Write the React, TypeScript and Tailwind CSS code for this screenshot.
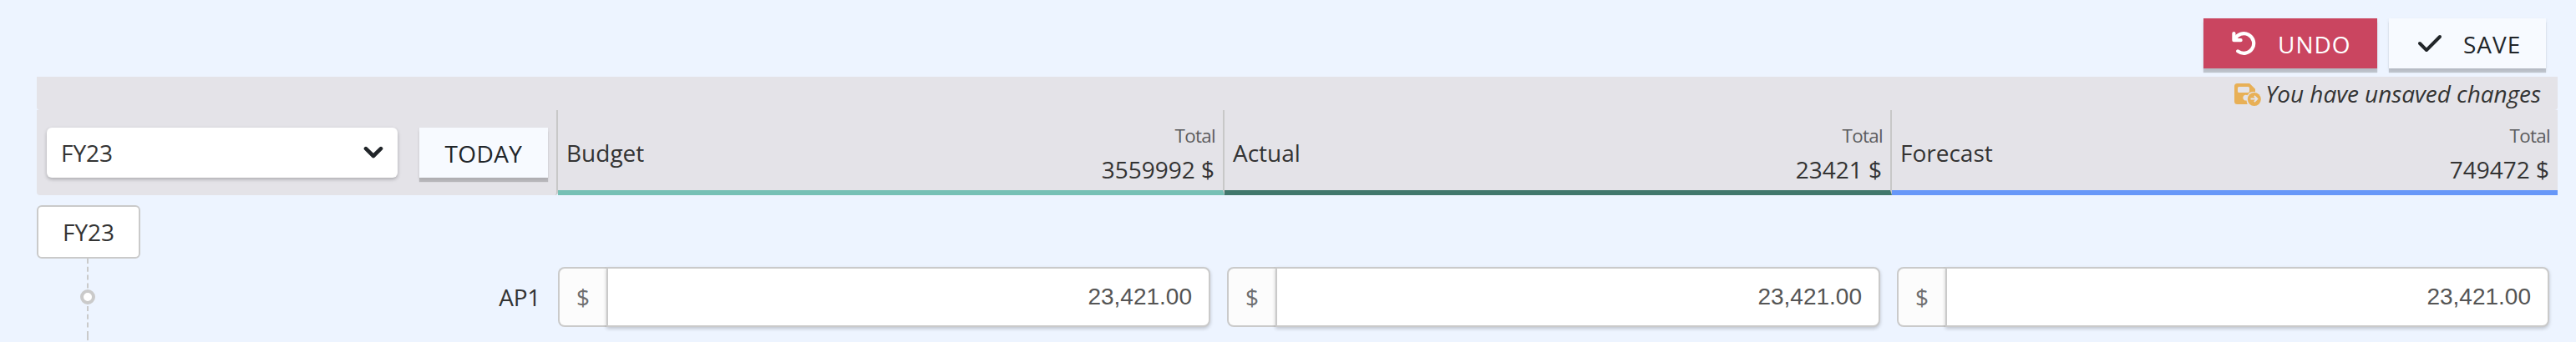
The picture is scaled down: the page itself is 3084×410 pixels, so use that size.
import { useState } from "react"
import { FaCheck } from "react-icons/fa6"

interface Column {
    name: string
    total: number
    value: string
    cell: string
    field: string
}

const columns: Column[] = [
    { name: "Budget", total: 3559992, value: "23,421.00", cell: "w-[798px] border-r-2 border-b-[#76c0b5]", field: "w-[781px]" },
    { name: "Actual", total: 23421, value: "23,421.00", cell: "w-[799px] border-r-2 border-b-[#41776c]", field: "w-[782px]" },
    { name: "Forecast", total: 749472, value: "23,421.00", cell: "w-[797px] border-b-[#6797f8]", field: "w-[781px]" },
]

const SaveMoveIcon = () => (
    <svg viewBox="0 0 32 27" className="w-8 h-[27px] shrink-0" fill="none">
        <path fillRule="evenodd" fill="#e8b056" d="M3.5 0H18.2L25 6.8V10.2A8.6 8.6 0 0 0 15.6 14.3A3.4 3.4 0 1 0 14.6 20.4Q14.7 23 15.8 25H3.5Q0 25 0 21.5V3.5Q0 0 3.5 0ZM5.5 3.9Q4 3.9 4 5.4V9.4Q4 10.9 5.5 10.9H16Q18 10.9 18 9.4V5.4Q18 3.9 16.5 3.9Z" />
        <circle cx="23.8" cy="19" r="8" fill="#e8b056" />
        <path d="M19.5 18.5H27M23.8 15L27.4 18.5L23.8 22" stroke="#e4e3e8" strokeWidth="1.8" />
    </svg>
)

const UndoIcon = () => (
    <svg viewBox="0 0 30 30" className="w-[30px] h-[30px] shrink-0" fill="none" stroke="currentColor" strokeWidth="4.2" strokeLinecap="round" strokeLinejoin="round">
        <path d="M2.4 3V11.2H10.6" />
        <path d="M3.6 10.2A11.8 11.8 0 1 1 7.2 24.4" />
    </svg>
)

const ChevronIcon = () => (
    <svg viewBox="0 0 24 16" className="w-6 h-4 shrink-0" fill="none" stroke="#212529" strokeWidth="4.6" strokeLinecap="round" strokeLinejoin="round">
        <path d="M3 3.2L12 12L21 3.2" />
    </svg>
)

const TopActions = () => (
    <div className="h-[92px] pt-[22px] pr-9 flex justify-end gap-[14px]">
        <button className="w-[208px] h-[60px] bg-[#ca4560] text-white pl-[34px] flex items-center shadow-[0_5px_1px_rgba(0,0,0,0.19),0_2px_4px_rgba(0,0,0,0.08)]">
            <UndoIcon />
            <span className="ml-[25px] mt-[2px] tracking-[1px]">UNDO</span>
        </button>
        <button className="w-[188px] h-[60px] bg-[#f7faff] text-[#212529] pl-[34px] flex items-center shadow-[0_5px_1px_rgba(0,0,0,0.19),0_2px_4px_rgba(0,0,0,0.08)]">
            <FaCheck className="w-[30px] h-8" />
            <span className="ml-[25px] mt-[2px] tracking-[1px]">SAVE</span>
        </button>
    </div>
)

const App = () => {
    const [values, setValues] = useState(columns.map((c) => c.value))

    return (
        <div className="w-[3084px] h-[410px] overflow-hidden bg-[#edf4ff] text-[#333] text-[28px] leading-[38px] font-['Open_Sans',sans-serif]">
            <TopActions />

            <div className="ml-11 w-[3018px]">
                <div className="h-10 rounded-b-[4px] bg-[#e4e3e8] flex justify-end pr-5 pt-2">
                    <SaveMoveIcon />
                    <span className="ml-[5px] -mt-[7px] italic whitespace-nowrap tracking-[-0.06px]">You have unsaved changes</span>
                </div>

                <div className="flex h-[102px]">
                    <div className="w-[624px] h-full flex items-start pt-[21px] pl-3 bg-[#e4e3e8] rounded-b-[4px] border-r-2 border-[#c8c8c8]">
                        <div className="w-[420px] h-[60px] px-[17px] bg-white rounded-[6px] flex items-center justify-between shadow-[0_2px_4px_rgba(0,0,0,0.25)]">
                            <span>FY23</span>
                            <ChevronIcon />
                        </div>
                        <button className="ml-[26px] w-[154px] h-[60px] pt-[2px] bg-[#f7faff] text-[#212529] tracking-[0.4px] shadow-[0_5px_1px_rgba(0,0,0,0.19),0_2px_4px_rgba(0,0,0,0.08)]">TODAY</button>
                    </div>
                    {columns.map((c) => (
                        <div key={c.name} className={`${c.cell} h-full flex justify-between bg-[#e4e3e8] border-r-[#c8c8c8] border-b-[6px] px-[10px]`}>
                            <span className="mt-8">{c.name}</span>
                            <div className="text-right pt-[15px]">
                                <p className="-mr-px text-[22.4px] leading-[32px] tracking-[-0.7px] text-[#5c5c5e]">Total</p>
                                <p className="mt-[5px]">{c.total} $</p>
                            </div>
                        </div>
                    ))}
                </div>

                <div className="flex pt-3">
                    <div className="w-[124px]">
                        <div className="h-16 bg-white border-2 border-[#cacaca] rounded-[6px] flex items-center justify-center">FY23</div>
                        <svg viewBox="0 0 124 100" className="w-[124px] h-[100px]">
                            <path d="M61 0V37M61 57V86" stroke="#cacaca" strokeWidth="2" strokeDasharray="6 3.8" />
                            <path d="M61 87V98" stroke="#cacaca" strokeWidth="2" />
                            <circle cx="61" cy="46" r="7" fill="#fff" stroke="#cacaca" strokeWidth="4" />
                        </svg>
                    </div>
                    <div className="w-[500px] pt-[91px] pr-[21px] text-right tracking-[-0.3px]">AP1</div>
                    <div className="flex gap-5 pt-[74px]">
                        {columns.map((c, i) => (
                            <div key={c.name} className={`${c.field} h-[72px] flex`}>
                                <span className="w-[58px] h-full border-2 border-r-0 border-[#cacaca] bg-[#fcfcfc] rounded-l-[8px] flex items-center justify-center text-[#6f6f6f]">$</span>
                                <input
                                    type="text"
                                    value={values[i]}
                                    onChange={(e) => setValues(values.map((v, n) => (n === i ? e.target.value : v)))}
                                    className="flex-1 min-w-0 h-full bg-white border-2 border-[#cacaca] rounded-r-[8px] pr-5 text-right text-[#555] font-['Liberation_Sans',sans-serif] shadow-[0_2px_4px_rgba(0,0,0,0.2)]"
                                />
                            </div>
                        ))}
                    </div>
                </div>
            </div>
        </div>
    )
}

export default App
